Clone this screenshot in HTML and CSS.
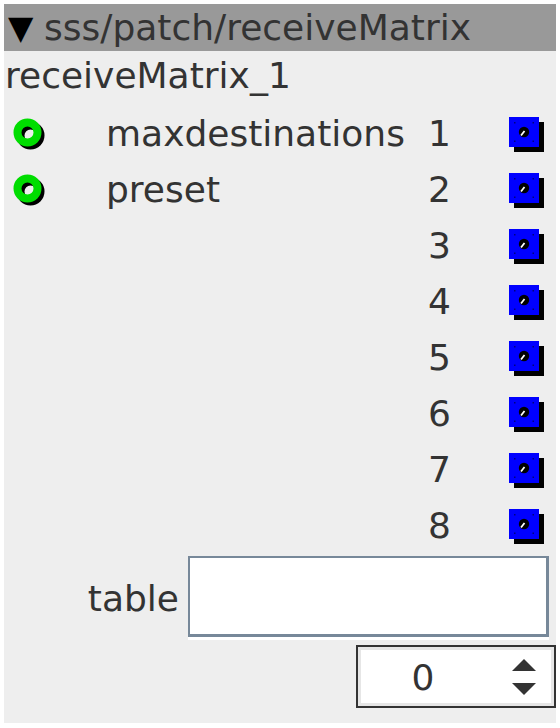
FILE: index.html
```html
<!DOCTYPE html>
<html lang="en">
<head>
  <meta charset="UTF-8">
  <title>receiveMatrix</title>
  <link rel="stylesheet" href="styles.css">
</head>
<body>
  <div class="panel">
    <div class="panel-header">
      <span class="toggle">&#9660;</span>
      <span class="path">sss/patch/receiveMatrix</span>
    </div>

    <div class="instance-name">receiveMatrix_1</div>

    <div class="ports">
      <div class="port-row">
        <span class="inlet"><svg width="36" height="36" viewBox="0 0 36 36"><circle cx="17.5" cy="17.5" r="10" fill="none" stroke="#000" stroke-width="8"/><circle cx="14.5" cy="14.5" r="10" fill="none" stroke="#00dd00" stroke-width="8"/></svg></span>
        <span class="port-label">maxdestinations</span>
        <span class="port-num">1</span>
        <span class="outlet"><svg width="36" height="36" viewBox="0 0 36 36"><rect x="5" y="5" width="30" height="30" fill="#000"/><rect x="0" y="0" width="30" height="30" fill="#0000ff"/><circle cx="15" cy="15" r="5.2" fill="#000"/><path d="M12 18.5 L15.5 14" stroke="#fff" stroke-width="1.8"/><rect x="5" y="5" width="1.5" height="1.5" fill="#000080"/><rect x="23.5" y="5" width="1.5" height="1.5" fill="#000080"/><rect x="5" y="23.5" width="1.5" height="1.5" fill="#000080"/><rect x="23.5" y="23.5" width="1.5" height="1.5" fill="#000080"/></svg></span>
      </div>
      <div class="port-row">
        <span class="inlet"><svg width="36" height="36" viewBox="0 0 36 36"><circle cx="17.5" cy="17.5" r="10" fill="none" stroke="#000" stroke-width="8"/><circle cx="14.5" cy="14.5" r="10" fill="none" stroke="#00dd00" stroke-width="8"/></svg></span>
        <span class="port-label">preset</span>
        <span class="port-num">2</span>
        <span class="outlet"><svg width="36" height="36" viewBox="0 0 36 36"><rect x="5" y="5" width="30" height="30" fill="#000"/><rect x="0" y="0" width="30" height="30" fill="#0000ff"/><circle cx="15" cy="15" r="5.2" fill="#000"/><path d="M12 18.5 L15.5 14" stroke="#fff" stroke-width="1.8"/><rect x="5" y="5" width="1.5" height="1.5" fill="#000080"/><rect x="23.5" y="5" width="1.5" height="1.5" fill="#000080"/><rect x="5" y="23.5" width="1.5" height="1.5" fill="#000080"/><rect x="23.5" y="23.5" width="1.5" height="1.5" fill="#000080"/></svg></span>
      </div>
      <div class="port-row">
        <span class="inlet"></span>
        <span class="port-label"></span>
        <span class="port-num">3</span>
        <span class="outlet"><svg width="36" height="36" viewBox="0 0 36 36"><rect x="5" y="5" width="30" height="30" fill="#000"/><rect x="0" y="0" width="30" height="30" fill="#0000ff"/><circle cx="15" cy="15" r="5.2" fill="#000"/><path d="M12 18.5 L15.5 14" stroke="#fff" stroke-width="1.8"/><rect x="5" y="5" width="1.5" height="1.5" fill="#000080"/><rect x="23.5" y="5" width="1.5" height="1.5" fill="#000080"/><rect x="5" y="23.5" width="1.5" height="1.5" fill="#000080"/><rect x="23.5" y="23.5" width="1.5" height="1.5" fill="#000080"/></svg></span>
      </div>
      <div class="port-row">
        <span class="inlet"></span>
        <span class="port-label"></span>
        <span class="port-num">4</span>
        <span class="outlet"><svg width="36" height="36" viewBox="0 0 36 36"><rect x="5" y="5" width="30" height="30" fill="#000"/><rect x="0" y="0" width="30" height="30" fill="#0000ff"/><circle cx="15" cy="15" r="5.2" fill="#000"/><path d="M12 18.5 L15.5 14" stroke="#fff" stroke-width="1.8"/><rect x="5" y="5" width="1.5" height="1.5" fill="#000080"/><rect x="23.5" y="5" width="1.5" height="1.5" fill="#000080"/><rect x="5" y="23.5" width="1.5" height="1.5" fill="#000080"/><rect x="23.5" y="23.5" width="1.5" height="1.5" fill="#000080"/></svg></span>
      </div>
      <div class="port-row">
        <span class="inlet"></span>
        <span class="port-label"></span>
        <span class="port-num">5</span>
        <span class="outlet"><svg width="36" height="36" viewBox="0 0 36 36"><rect x="5" y="5" width="30" height="30" fill="#000"/><rect x="0" y="0" width="30" height="30" fill="#0000ff"/><circle cx="15" cy="15" r="5.2" fill="#000"/><path d="M12 18.5 L15.5 14" stroke="#fff" stroke-width="1.8"/><rect x="5" y="5" width="1.5" height="1.5" fill="#000080"/><rect x="23.5" y="5" width="1.5" height="1.5" fill="#000080"/><rect x="5" y="23.5" width="1.5" height="1.5" fill="#000080"/><rect x="23.5" y="23.5" width="1.5" height="1.5" fill="#000080"/></svg></span>
      </div>
      <div class="port-row">
        <span class="inlet"></span>
        <span class="port-label"></span>
        <span class="port-num">6</span>
        <span class="outlet"><svg width="36" height="36" viewBox="0 0 36 36"><rect x="5" y="5" width="30" height="30" fill="#000"/><rect x="0" y="0" width="30" height="30" fill="#0000ff"/><circle cx="15" cy="15" r="5.2" fill="#000"/><path d="M12 18.5 L15.5 14" stroke="#fff" stroke-width="1.8"/><rect x="5" y="5" width="1.5" height="1.5" fill="#000080"/><rect x="23.5" y="5" width="1.5" height="1.5" fill="#000080"/><rect x="5" y="23.5" width="1.5" height="1.5" fill="#000080"/><rect x="23.5" y="23.5" width="1.5" height="1.5" fill="#000080"/></svg></span>
      </div>
      <div class="port-row">
        <span class="inlet"></span>
        <span class="port-label"></span>
        <span class="port-num">7</span>
        <span class="outlet"><svg width="36" height="36" viewBox="0 0 36 36"><rect x="5" y="5" width="30" height="30" fill="#000"/><rect x="0" y="0" width="30" height="30" fill="#0000ff"/><circle cx="15" cy="15" r="5.2" fill="#000"/><path d="M12 18.5 L15.5 14" stroke="#fff" stroke-width="1.8"/><rect x="5" y="5" width="1.5" height="1.5" fill="#000080"/><rect x="23.5" y="5" width="1.5" height="1.5" fill="#000080"/><rect x="5" y="23.5" width="1.5" height="1.5" fill="#000080"/><rect x="23.5" y="23.5" width="1.5" height="1.5" fill="#000080"/></svg></span>
      </div>
      <div class="port-row">
        <span class="inlet"></span>
        <span class="port-label"></span>
        <span class="port-num">8</span>
        <span class="outlet"><svg width="36" height="36" viewBox="0 0 36 36"><rect x="5" y="5" width="30" height="30" fill="#000"/><rect x="0" y="0" width="30" height="30" fill="#0000ff"/><circle cx="15" cy="15" r="5.2" fill="#000"/><path d="M12 18.5 L15.5 14" stroke="#fff" stroke-width="1.8"/><rect x="5" y="5" width="1.5" height="1.5" fill="#000080"/><rect x="23.5" y="5" width="1.5" height="1.5" fill="#000080"/><rect x="5" y="23.5" width="1.5" height="1.5" fill="#000080"/><rect x="23.5" y="23.5" width="1.5" height="1.5" fill="#000080"/></svg></span>
      </div>
    </div>

    <div class="table-row">
      <label class="table-label" for="tableInput">table</label>
      <input class="table-input" id="tableInput" type="text">
    </div>

    <div class="spin-row">
      <div class="spinbox">
        <span class="spin-value">0</span>
        <span class="spin-arrows">
          <span class="arrow-up"></span>
          <span class="arrow-down"></span>
        </span>
      </div>
    </div>
  </div>
</body>
</html>
```

FILE: styles.css
```css
body {
  margin: 4px;
  background: #fff;
  font-family: 'DejaVu Sans', sans-serif;
  font-size: 36px;
  color: #333;
}

.panel {
  width: 552px;
  height: 719px;
  background: #eeeeee;
}

.panel-header {
  display: flex;
  align-items: center;
  height: 47px;
  background: #999999;
  padding-left: 4px;
}

.toggle {
  color: #000;
  font-size: 33px;
  width: 36px;
}

.path {
  line-height: 47px;
}

.instance-name {
  height: 54px;
  line-height: 50px;
  padding-left: 1px;
}

.port-row {
  display: grid;
  grid-template-columns: 102px 318px 85px 1fr;
  align-items: center;
  height: 56px;
}

.inlet {
  padding-left: 9px;
  padding-top: 6px;
  display: flex;
}

.port-num {
  padding-left: 4px;
}

.outlet {
  display: flex;
  padding-top: 4px;
}

.table-row {
  display: flex;
  align-items: center;
  justify-content: flex-end;
  margin-top: 3px;
  padding-right: 7px;
  gap: 9px;
}

.table-label {
  padding-top: 4px;
}

.table-input {
  width: 361px;
  height: 81px;
  box-sizing: border-box;
  margin: 0;
  padding: 0;
  background: #fff;
  border: 2px solid #778899;
  border-right-width: 3px;
  border-bottom-width: 3px;
  box-shadow: 0 3px 0 #fff;
}

.spin-row {
  display: flex;
  justify-content: flex-end;
  margin-top: 8px;
}

.spinbox {
  display: flex;
  align-items: center;
  width: 200px;
  height: 63px;
  box-sizing: border-box;
  border: 2px solid #333;
  background: #fff;
  box-shadow: inset 0 0 0 3px #e6e6e6;
}

.spin-value {
  width: 130px;
  text-align: center;
  padding-top: 2px;
}

.spin-arrows {
  display: flex;
  flex-direction: column;
  gap: 12px;
  margin-left: 24px;
}

.arrow-up {
  width: 0;
  height: 0;
  border-left: 12px solid transparent;
  border-right: 12px solid transparent;
  border-bottom: 12px solid #333;
}

.arrow-down {
  width: 0;
  height: 0;
  border-left: 12px solid transparent;
  border-right: 12px solid transparent;
  border-top: 12px solid #333;
}
```
